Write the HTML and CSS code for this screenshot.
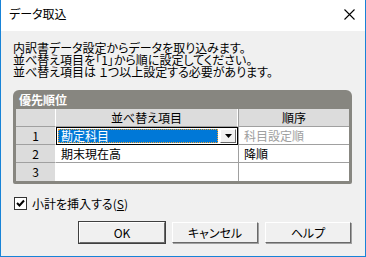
FILE: index.html
```html
<!DOCTYPE html>
<html lang="ja">
<head>
<meta charset="utf-8">
<link rel="stylesheet" href="styles.css">
</head>
<body>
<div class="window">
  <div class="titlebar">
    <span class="title">データ取込</span>
    <svg class="close" width="11" height="11" viewBox="0 0 11 11"><path d="M0.5 0.5 L10.5 10.5 M10.5 0.5 L0.5 10.5" stroke="#000" stroke-width="1.1" fill="none"/></svg>
  </div>
  <div class="client">
    <div class="msg">
      <div>内訳書データ設定からデータを取り込みます。</div>
      <div>並べ替え項目を「1」から順に設定してください。</div>
      <div>並べ替え項目は １つ以上設定する必要があります。</div>
    </div>
    <div class="panel">
      <div class="panel-head">優先順位</div>
      <div class="grid">
        <div class="hc rh"></div>
        <div class="hc">並べ替え項目</div>
        <div class="hc last">順序</div>

        <div class="rh">1</div>
        <div class="cell editing">
          <div class="sel">勘定科目</div>
          <div class="dd"><svg width="7" height="4" viewBox="0 0 7 4"><path d="M0 0 H7 L3.5 4 Z" fill="#000"/></svg></div>
        </div>
        <div class="cell last dim">科目設定順</div>

        <div class="rh">2</div>
        <div class="cell">期末現在高</div>
        <div class="cell last">降順</div>

        <div class="rh bottom">3</div>
        <div class="cell bottom"></div>
        <div class="cell last bottom"></div>
      </div>
    </div>
    <label class="check">
      <span class="box"><svg width="9" height="9" viewBox="0 0 9 9"><path d="M1 4 L3.5 6.5 L8 1.5" stroke="#000" stroke-width="2" fill="none"/></svg></span>
      <span>小計を挿入する(<u>S</u>)</span>
    </label>
    <div class="buttons">
      <div class="btn default">OK</div>
      <div class="btn">キャンセル</div>
      <div class="btn">ヘルプ</div>
    </div>
  </div>
</div>
</body>
</html>
```

FILE: styles.css
```css
* { box-sizing: border-box; }
html, body { margin: 0; padding: 0; }
body {
  font-family: "Noto Sans CJK JP", "Noto Sans", sans-serif;
  font-size: 12px;
  font-feature-settings: "palt";
  color: #000;
  background: #fff;
}
.window {
  width: 366px;
  height: 257px;
  border: 1px solid #1883d7;
  border-top: none;
  display: flex;
  flex-direction: column;
  background: #f0f0f0;
}
.titlebar {
  height: 31px;
  background: #fff;
  display: flex;
  align-items: center;
  justify-content: space-between;
  padding: 0 10px 3px 8px;
}
.title { font-size: 12px; line-height: 12px; }
.close { margin-top: 1px; }
.client {
  flex: 1;
  padding: 11px 13px 0 12px;
  display: flex;
  flex-direction: column;
}
.msg div { line-height: 12px; height: 12px; white-space: nowrap; }
.panel {
  margin-top: 12px;
  width: 339px;
  background: #878680;
  border-radius: 6px 6px 2px 2px;
  padding: 0 3px 3px 3px;
}
.panel-head {
  height: 19px;
  color: #fff;
  font-weight: bold;
  line-height: 19px;
  padding-left: 3px;
  font-size: 12px;
}
.grid {
  display: grid;
  grid-template-columns: 40px 182px 111px;
  grid-auto-rows: 18px;
  background: #fff;
}
.grid > div {
  border-bottom: 1px solid #a0a0a0;
  line-height: 17px;
  white-space: nowrap;
}
.grid > div.bottom { border-bottom: none; }
.hc {
  background: #dcdcdc;
  text-align: center;
  border-right: 1px solid #fff;
}
.hc.last { border-right: none; border-left: 1px solid #a0a0a0; }
.rh {
  background: #dcdcdc;
  text-align: center;
  border-right: 1px solid #fff;
}
.cell { padding-left: 5px; background: #fff; }
.cell.last { border-left: 1px solid #a0a0a0; }
.dim { color: #a0a0a0; }
.cell.editing {
  padding: 1px;
  display: flex;
  gap: 2px;
  border: 1px solid #000;
  border-bottom: 1px solid #000;
}
.sel {
  flex: 1;
  background: #0078d7;
  color: #fff;
  line-height: 14px;
  padding-left: 3px;
  outline: 1px dotted #f0a030;
  outline-offset: -1px;
}
.dd {
  width: 16px;
  background: #f0f0f0;
  border: 1px solid;
  border-color: #fff #696969 #696969 #fff;
  display: flex;
  align-items: center;
  justify-content: center;
}
.check {
  margin-top: 13px;
  display: flex;
  align-items: center;
  gap: 5px;
  margin-left: 1px;
  height: 13px;
  line-height: 13px;
}
.box {
  width: 13px;
  height: 13px;
  background: #fff;
  border: 1px solid #333;
  display: flex;
  align-items: center;
  justify-content: center;
}
.buttons {
  margin-top: 12px;
  display: flex;
  justify-content: flex-end;
  gap: 7px;
  margin-right: 1px;
}
.btn {
  width: 86px;
  height: 21px;
  background: #f0f0f0;
  border: 1px solid;
  border-color: #fff #696969 #696969 #fff;
  box-shadow: 1px 1px 0 #a0a0a0;
  text-align: center;
  line-height: 19px;
}
.btn.default {
  outline: 1px solid #404040;
}
```
